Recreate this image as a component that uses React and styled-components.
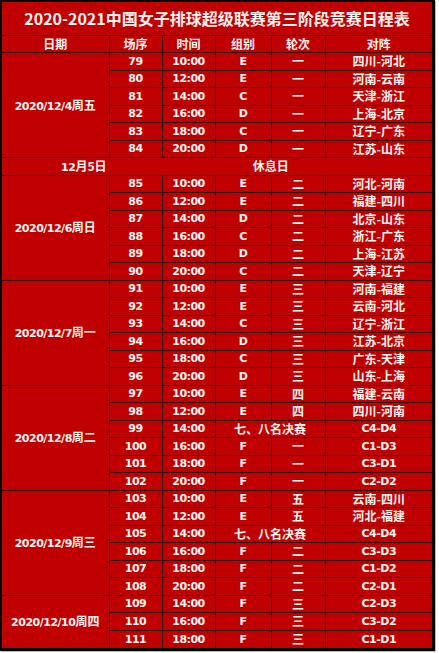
import React from "react";
import styled, { createGlobalStyle } from "styled-components";

const GlobalStyle = createGlobalStyle`
  html, body { margin: 0; padding: 0; background: #ffffff; }
  #root { width: 439px; height: 653px; }
`;

const Frame = styled.div`
  box-sizing: border-box;
  width: 435px;
  border-left: 2px solid #000;
  border-top: 2px solid #000;
  border-right: 3px solid #000;
  border-bottom: 3px solid #000;
  background: #c00000;
  box-shadow: 1px 1px 0 #bdbdbd;
`;

const Table = styled.table`
  width: 430px;
  table-layout: fixed;
  border-collapse: collapse;
  border-style: hidden;
  background: #c00000;
  color: #fff6f2;
  font-family: "DejaVu Sans", "Noto Sans CJK SC", sans-serif;
  font-weight: bold;
  font-size: 11px;
  letter-spacing: -0.5px;
`;

const TitleRow = styled.tr`
  height: 33px;
`;

const Row = styled.tr`
  height: 17.5px;
`;

const TitleCell = styled.th`
  border: 1px solid #2a0000;
  padding: 0;
  text-align: center;
  vertical-align: middle;
  font-family: "Noto Sans CJK SC", sans-serif;
  font-size: 16px;
  font-weight: bold;
  letter-spacing: 0;
  color: #fff2ee;
  white-space: nowrap;
`;

const HeadCell = styled.th`
  border: 1px solid #2a0000;
  padding: 0;
  text-align: center;
  vertical-align: middle;
  font-family: "Noto Sans CJK SC", sans-serif;
  font-size: 12px;
  font-weight: bold;
  letter-spacing: 0;
  line-height: 1;
  white-space: nowrap;
`;

const Cell = styled.td`
  border: 1px solid #2a0000;
  padding: 0;
  text-align: center;
  vertical-align: middle;
  line-height: 1;
  white-space: nowrap;
  overflow: hidden;
`;

const CjkCell = styled(Cell)`
  font-family: "Noto Sans CJK SC", sans-serif;
  font-size: 12px;
  letter-spacing: 0;
`;

const DateCell = styled(Cell)`
  letter-spacing: -0.5px;
`;

const RestDateCell = styled(Cell)`
  text-align: right;
  padding-right: 2px;
  border-right-color: transparent;
`;

const RestCell = styled(CjkCell)`
  border-left-color: transparent;
`;

const CjkSpan = styled.span`
  font-family: "Noto Sans CJK SC", sans-serif;
  font-size: 12px;
  letter-spacing: 0;
`;

const groups = [
  {
    date: "2020/12/4",
    day: "周五",
    rows: [
      ["79", "10:00", "E", "一", "四川-河北"],
      ["80", "12:00", "E", "一", "河南-云南"],
      ["81", "14:00", "C", "一", "天津-浙江"],
      ["82", "16:00", "D", "一", "上海-北京"],
      ["83", "18:00", "C", "一", "辽宁-广东"],
      ["84", "20:00", "D", "一", "江苏-山东"],
    ],
  },
  { rest: true, date: "12", day: "月5日", label: "休息日" },
  {
    date: "2020/12/6",
    day: "周日",
    rows: [
      ["85", "10:00", "E", "二", "河北-河南"],
      ["86", "12:00", "E", "二", "福建-四川"],
      ["87", "14:00", "D", "二", "北京-山东"],
      ["88", "16:00", "C", "二", "浙江-广东"],
      ["89", "18:00", "D", "二", "上海-江苏"],
      ["90", "20:00", "C", "二", "天津-辽宁"],
    ],
  },
  {
    date: "2020/12/7",
    day: "周一",
    rows: [
      ["91", "10:00", "E", "三", "河南-福建"],
      ["92", "12:00", "E", "三", "云南-河北"],
      ["93", "14:00", "C", "三", "辽宁-浙江"],
      ["94", "16:00", "D", "三", "江苏-北京"],
      ["95", "18:00", "C", "三", "广东-天津"],
      ["96", "20:00", "D", "三", "山东-上海"],
    ],
  },
  {
    date: "2020/12/8",
    day: "周二",
    rows: [
      ["97", "10:00", "E", "四", "福建-云南"],
      ["98", "12:00", "E", "四", "四川-河南"],
      ["99", "14:00", null, "七、八名决赛", "C4-D4"],
      ["100", "16:00", "F", "一", "C1-D3"],
      ["101", "18:00", "F", "一", "C3-D1"],
      ["102", "20:00", "F", "一", "C2-D2"],
    ],
  },
  {
    date: "2020/12/9",
    day: "周三",
    rows: [
      ["103", "10:00", "E", "五", "云南-四川"],
      ["104", "12:00", "E", "五", "河北-福建"],
      ["105", "14:00", null, "七、八名决赛", "C4-D4"],
      ["106", "16:00", "F", "二", "C3-D3"],
      ["107", "18:00", "F", "二", "C1-D2"],
      ["108", "20:00", "F", "二", "C2-D1"],
    ],
  },
  {
    date: "2020/12/10",
    day: "周四",
    rows: [
      ["109", "14:00", "F", "三", "C2-D3"],
      ["110", "16:00", "F", "三", "C3-D2"],
      ["111", "18:00", "F", "三", "C1-D1"],
    ],
  },
];

const isLatin = (s) => /^[A-Za-z0-9\-:]+$/.test(s);

function MatchCell({ text }) {
  return isLatin(text) ? <Cell>{text}</Cell> : <CjkCell>{text}</CjkCell>;
}

export default function App() {
  return (
    <>
      <GlobalStyle />
      <Frame>
        <Table>
          <colgroup>
            <col style={{ width: 107 }} />
            <col style={{ width: 53 }} />
            <col style={{ width: 53 }} />
            <col style={{ width: 56 }} />
            <col style={{ width: 54 }} />
            <col style={{ width: 107 }} />
          </colgroup>
          <thead>
            <TitleRow>
              <TitleCell colSpan={6}>2020-2021中国女子排球超级联赛第三阶段竞赛日程表</TitleCell>
            </TitleRow>
            <Row>
              <HeadCell>日期</HeadCell>
              <HeadCell>场序</HeadCell>
              <HeadCell>时间</HeadCell>
              <HeadCell>组别</HeadCell>
              <HeadCell>轮次</HeadCell>
              <HeadCell>对阵</HeadCell>
            </Row>
          </thead>
          <tbody>
            {groups.map((g, gi) =>
              g.rest ? (
                <Row key={gi}>
                  <RestDateCell>
                    {g.date}
                    <CjkSpan>{g.day}</CjkSpan>
                  </RestDateCell>
                  <RestCell colSpan={5}>{g.label}</RestCell>
                </Row>
              ) : (
                g.rows.map((r, ri) => (
                  <Row key={`${gi}-${ri}`}>
                    {ri === 0 && (
                      <DateCell rowSpan={g.rows.length}>
                        {g.date}
                        <CjkSpan>{g.day}</CjkSpan>
                      </DateCell>
                    )}
                    <Cell>{r[0]}</Cell>
                    <Cell>{r[1]}</Cell>
                    {r[2] === null ? (
                      <CjkCell colSpan={2}>{r[3]}</CjkCell>
                    ) : (
                      <>
                        <Cell>{r[2]}</Cell>
                        <CjkCell>{r[3]}</CjkCell>
                      </>
                    )}
                    <MatchCell text={r[4]} />
                  </Row>
                ))
              )
            )}
          </tbody>
        </Table>
      </Frame>
    </>
  );
}
